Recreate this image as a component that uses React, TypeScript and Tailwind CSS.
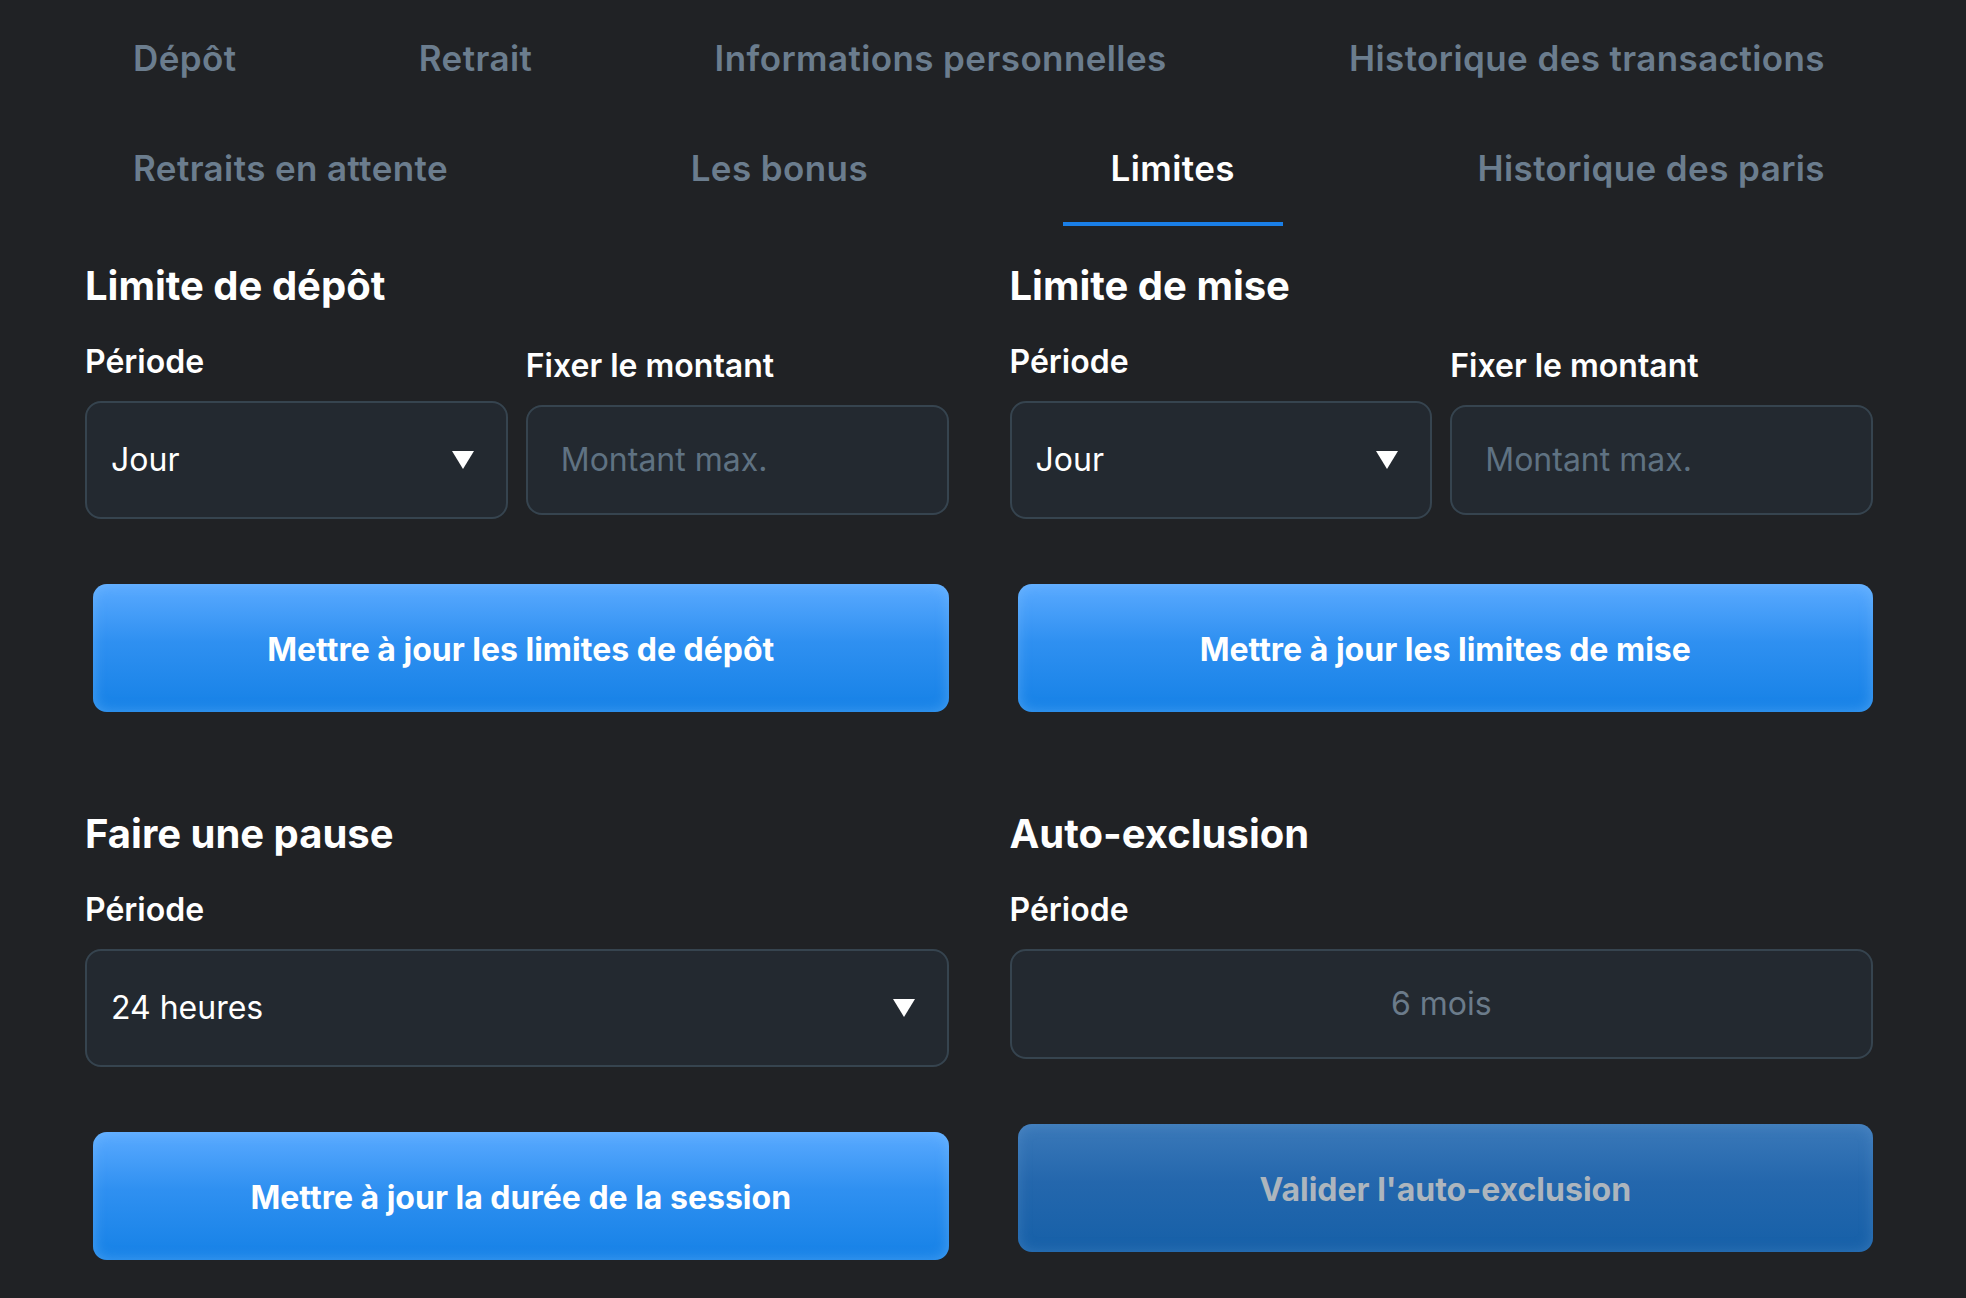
import React from "react";

const tabsRow1 = ["Dépôt", "Retrait", "Informations personnelles", "Historique des transactions"];
const tabsRow2 = ["Retraits en attente", "Les bonus", "Limites", "Historique des paris"];

function Caret() {
  return (
    <svg width="22" height="18" viewBox="0 0 22 18" className="shrink-0">
      <path d="M0 0 L22 0 L11 18 Z" fill="#ffffff" />
    </svg>
  );
}

function SelectBox({ value }: { value: string }) {
  return (
    <div className="h-[118px] w-full rounded-[16px] border-2 border-[#36444f] bg-[#232930] pl-[24px] pr-[32px] flex items-center justify-between">
      <span className="text-[32px] text-white font-normal">{value}</span>
      <Caret />
    </div>
  );
}

function InputBox({ placeholder, center }: { placeholder: string; center?: boolean }) {
  return (
    <div
      className={
        center
          ? "h-[110px] w-full rounded-[16px] border-2 border-[#36444f] bg-[#232930] flex items-center justify-center"
          : "h-[110px] w-full rounded-[16px] border-2 border-[#36444f] bg-[#232930] pl-[33px] flex items-center"
      }
    >
      <span className={center ? "text-[32px] text-[#6b7b8a]" : "text-[32px] text-[#5f7282]"}>{placeholder}</span>
    </div>
  );
}

function Label({ children }: { children: React.ReactNode }) {
  return <div className="text-[32px] leading-[36px] font-semibold text-white mb-[21px]">{children}</div>;
}

function Heading({ children }: { children: React.ReactNode }) {
  return <h2 className="text-[40px] leading-[48px] font-bold text-white">{children}</h2>;
}

function PrimaryButton({ children }: { children: React.ReactNode }) {
  return (
    <div className="mt-[65px] ml-[8px] h-[128px] pt-[4px] rounded-[14px] bg-[linear-gradient(180deg,#5aaaff_0%,#2f90f1_45%,#1581e6_100%)] shadow-[inset_0_0_14px_rgba(130,195,255,0.45)] flex items-center justify-center">
      <span className="text-[32px] font-bold text-white">{children}</span>
    </div>
  );
}

function DisabledButton({ children }: { children: React.ReactNode }) {
  return (
    <div className="mt-[65px] ml-[8px] h-[128px] pt-[3px] rounded-[14px] bg-[linear-gradient(180deg,#3b79b9_0%,#2467ad_45%,#1660a8_100%)] shadow-[inset_0_0_14px_rgba(110,160,215,0.35)] flex items-center justify-center">
      <span className="text-[32px] font-bold text-[#adb5bd]">{children}</span>
    </div>
  );
}

function LimitSection({ title, button }: { title: string; button: string }) {
  return (
    <div>
      <Heading>{title}</Heading>
      <div className="mt-[34px] grid grid-cols-2 gap-x-[18px] items-center">
        <div>
          <Label>Période</Label>
          <SelectBox value="Jour" />
        </div>
        <div>
          <Label>Fixer le montant</Label>
          <InputBox placeholder="Montant max." />
        </div>
      </div>
      <PrimaryButton>{button}</PrimaryButton>
    </div>
  );
}

export default function App() {
  return (
    <div className="min-h-screen w-full bg-[#202225]" style={{ fontFamily: "Inter, 'Noto Sans', sans-serif" }}>
      <div className="ml-[85px] w-[1788px] pt-[3px]">
        <div className="flex justify-between">
          {tabsRow1.map((t) => (
            <div
              key={t}
              className="h-[110px] px-[48px] flex items-center text-[35px] tracking-[0.4px] font-semibold text-[#6b7d8e] whitespace-nowrap"
            >
              {t}
            </div>
          ))}
        </div>
        <div className="flex justify-between">
          {tabsRow2.map((t) => (
            <div
              key={t}
              className={
                t === "Limites"
                  ? "h-[113px] px-[48px] pt-[2px] flex items-center border-b-4 border-[#1a7fe8] text-[35px] tracking-[0.4px] font-semibold text-white whitespace-nowrap"
                  : "h-[113px] px-[48px] pt-[2px] flex items-center border-b-4 border-transparent text-[35px] tracking-[0.4px] font-semibold text-[#6b7d8e] whitespace-nowrap"
              }
            >
              {t}
            </div>
          ))}
        </div>

        <div className="mt-[36px] grid grid-cols-2 gap-x-[61px]">
          <LimitSection title="Limite de dépôt" button="Mettre à jour les limites de dépôt" />
          <LimitSection title="Limite de mise" button="Mettre à jour les limites de mise" />
        </div>

        <div className="mt-[98px] grid grid-cols-2 gap-x-[61px] items-start">
          <div>
            <Heading>Faire une pause</Heading>
            <div className="mt-[34px]">
              <Label>Période</Label>
              <SelectBox value="24 heures" />
            </div>
            <PrimaryButton>Mettre à jour la durée de la session</PrimaryButton>
          </div>
          <div>
            <Heading>Auto-exclusion</Heading>
            <div className="mt-[34px]">
              <Label>Période</Label>
              <InputBox placeholder="6 mois" center />
            </div>
            <DisabledButton>Valider l'auto-exclusion</DisabledButton>
          </div>
        </div>
      </div>
    </div>
  );
}
